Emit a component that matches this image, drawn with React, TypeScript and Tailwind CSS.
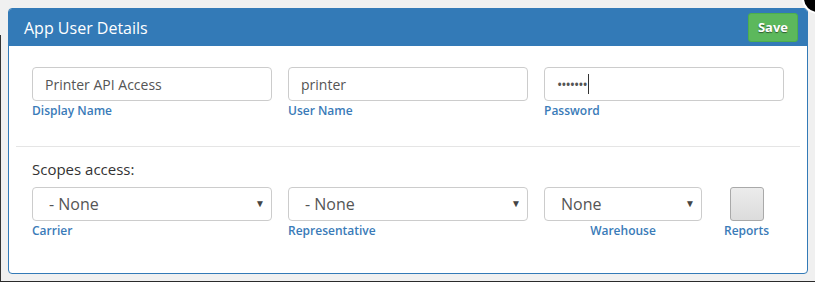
import React from "react";

function Field({ label, value, password }: { label: string; value: string; password?: boolean }) {
  return (
    <div className="flex flex-col">
      <div className="flex h-[34px] items-center rounded-[4px] border border-[#cccccc] bg-white px-[12px] text-[14px] text-[#555555]">
        {password ? (
          <span className="flex items-center">
            <span className="tracking-[-1px] text-[#555]">•••••••</span>
            <span className="ml-[1px] h-[20px] w-px bg-[#333]" />
          </span>
        ) : (
          value
        )}
      </div>
      <span className="mt-[1px] text-[12px] font-semibold text-[#3a7bb8]">{label}</span>
    </div>
  );
}

function Select({ value, label, center }: { value: string; label: string; center?: boolean }) {
  return (
    <div className="flex flex-col">
      <div className="flex h-[34px] items-center justify-between rounded-[4px] border border-[#cccccc] bg-white pl-[16px] pr-[6px] text-[16px] text-[#555555]">
        <span>{value}</span>
        <span className="text-[10px] text-[#444]">▼</span>
      </div>
      <span
        className={
          center
            ? "mt-[1px] text-center text-[12px] font-semibold text-[#3a7bb8]"
            : "mt-[1px] text-[12px] font-semibold text-[#3a7bb8]"
        }
      >
        {label}
      </span>
    </div>
  );
}

export default function App() {
  return (
    <div
      className="relative h-[282px] w-[815px] overflow-hidden border-b border-[#2a2a2a] bg-[#f0f0f0] pl-[8px] pt-[8px]"
      style={{ fontFamily: '"Open Sans", "Noto Sans", sans-serif' }}
    >
      {/* left frame edge */}
      <div className="absolute left-0 top-[35px] h-full w-px bg-[#333]" />

      <div className="h-[266px] w-[800px] overflow-hidden rounded-[4px] border border-[#337ab7] bg-white">
        {/* header */}
        <div className="flex h-[37px] items-center justify-between bg-[#337ab7] pl-[15px] pr-[9px]">
          <h2 className="text-[16px] text-white">App User Details</h2>
          <button className="h-[29px] w-[50px] rounded-[3px] border border-[#4cae4c] bg-[#5cb85c] text-[13px] font-bold text-white [text-shadow:0_1px_1px_rgba(0,0,0,0.5)]">
            Save
          </button>
        </div>

        {/* credentials */}
        <div className="grid grid-cols-3 gap-[16px] px-[23px] pt-[21px]">
          <Field label="Display Name" value="Printer API Access" />
          <Field label="User Name" value="printer" />
          <Field label="Password" value="" password />
        </div>

        <div className="mx-[7px] mt-[26px] h-px bg-[#e5e5e5]" />

        {/* scopes */}
        <div className="px-[23px] pt-[11px]">
          <p className="text-[15px] text-[#333333]">Scopes access:</p>
          <div className="mt-[6px] flex gap-[16px]">
            <div className="w-[240px]">
              <Select value="- None" label="Carrier" />
            </div>
            <div className="w-[240px]">
              <Select value="- None" label="Representative" />
            </div>
            <div className="w-[158px]">
              <Select value="None" label="Warehouse" center />
            </div>
            <div className="ml-[6px] flex flex-col items-center">
              <div className="h-[34px] w-[34px] rounded-[3px] border border-[#a9a9a9] bg-gradient-to-b from-[#ececec] to-[#dcdcdc]" />
              <span className="mt-[1px] text-[12px] font-semibold text-[#3a7bb8]">Reports</span>
            </div>
          </div>
        </div>
      </div>

      {/* close button */}
      <div className="absolute left-[802px] top-[-17px] h-[31px] w-[31px] rounded-full border-2 border-white bg-black" />
    </div>
  );
}
